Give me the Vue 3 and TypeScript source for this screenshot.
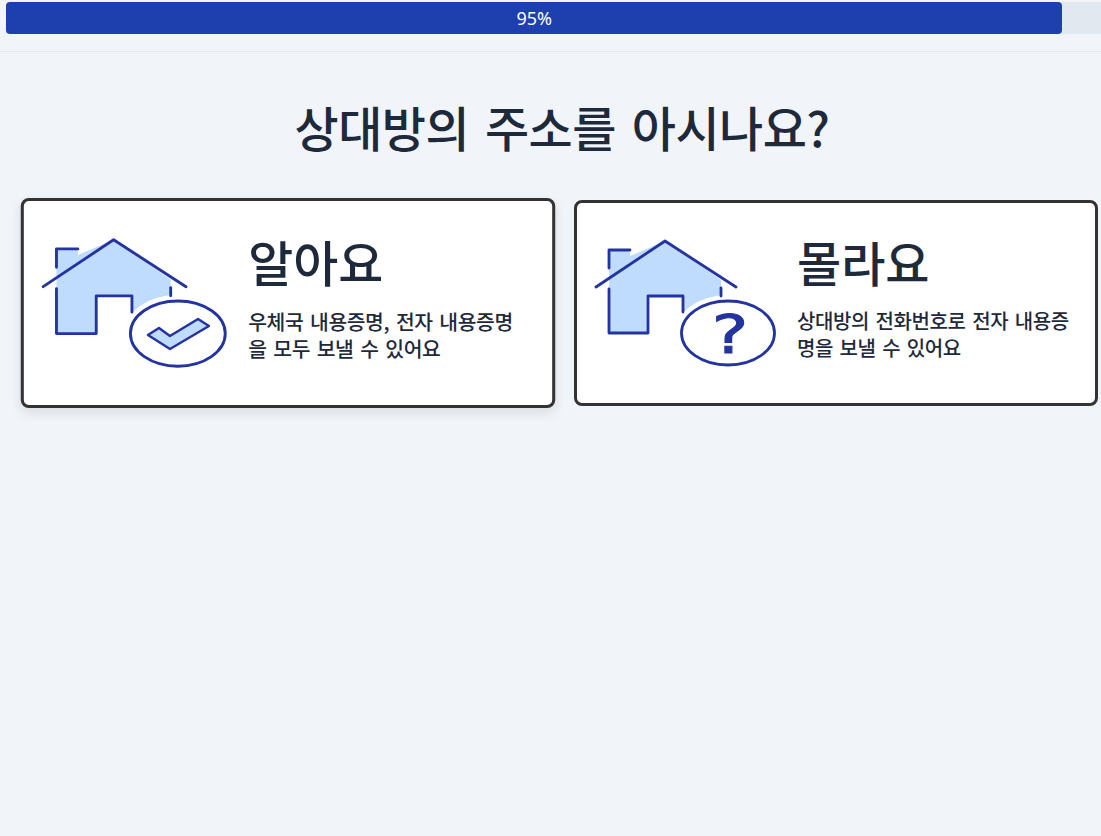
<script setup lang="ts">
const cards = [
  { title: '알아요', desc: '우체국 내용증명, 전자 내용증명을 모두 보낼 수 있어요', kind: 'check', active: true },
  { title: '몰라요', desc: '상대방의 전화번호로 전자 내용증명을 보낼 수 있어요', kind: 'question', active: false },
]
</script>

<template>
  <div class="page">
    <header class="top">
      <div class="track">
        <div class="fill" :style="{ width: '95%' }">95%</div>
      </div>
    </header>
    <main class="main">
      <h1 class="title">상대방의 주소를 아시나요?</h1>
      <div class="cards">
        <div v-for="c in cards" :key="c.title" class="card" :class="{ active: c.active }">
          <svg class="icon" viewBox="0 0 190 140" width="190" height="140">
            <path d="M19 17H40V23L75 8L131 47V100H93V63H58V100H19Z" fill="#bfdbfe" />
            <ellipse cx="138" cy="100" rx="53" ry="38" fill="#fff" />
            <g fill="none" stroke="#23339f" stroke-width="2.8" stroke-linejoin="round" stroke-linecap="round">
              <path d="M6 54L75 8L146 54" />
              <path d="M19 35V17H40" />
              <path d="M19 56V100H58V63H93V79" />
              <path d="M131 55V63" />
              <ellipse cx="138" cy="100" rx="46.5" ry="32" />
            </g>
            <path v-if="c.kind === 'check'" d="M108.7 101.4L119.5 94.5L130.3 102.4L157.8 85.7L168.5 92.5L130.3 115.1Z" fill="#bfdbfe" stroke="#23339f" stroke-width="2.4" stroke-linejoin="round" />
            <text v-else transform="translate(140 120) scale(1.28 1)" text-anchor="middle" class="qm">?</text>
          </svg>
          <div class="text">
            <h2 class="name">{{ c.title }}</h2>
            <p class="desc">{{ c.desc }}</p>
          </div>
        </div>
      </div>
    </main>
  </div>
</template>

<style>
html, body { margin: 0; background: #f1f5f9; overflow: hidden; }
</style>

<style scoped>
.page {
  width: 1101px;
  height: 836px;
  overflow: hidden;
  background: #f1f5f9;
  font-family: "Noto Sans CJK KR", "Noto Sans", sans-serif;
  color: #1e293b;
}
.top {
  height: 49px;
  border-bottom: 1px solid #e2e8f0;
  padding: 2px 0 0 6px;
}
.track {
  width: 1112px;
  height: 32px;
  background: #e2e8f0;
  border-radius: 4px;
}
.fill {
  height: 32px;
  background: #1e40af;
  border-radius: 4px;
  color: #fff;
  font: 18px/32px "Noto Sans", sans-serif;
  text-align: center;
}
.main { padding: 42px 0 0 26px; width: 1072px; }
.title {
  margin: 0;
  text-align: center;
  font-size: 48px;
  line-height: 64px;
  font-weight: 500;
  letter-spacing: -0.5px;
  word-spacing: 5.5px;
}
.cards {
  display: flex;
  gap: 24px;
  margin-top: 42px;
}
.card {
  flex: 0 0 524px;
  height: 206px;
  box-sizing: border-box;
  border: 3px solid #333;
  border-radius: 8px;
  background: #fff;
  display: flex;
  align-items: center;
  padding: 0 24px 0 13px;
  gap: 17px;
}
.card.active {
  transform: scale(1.02);
  box-shadow: 0 4px 10px rgba(15, 23, 42, 0.1);
}
.icon { flex: none; }
.text { flex: 1; min-width: 0; padding-bottom: 14px; }
.name {
  margin: 0 0 16px;
  font-size: 48px;
  line-height: 60px;
  font-weight: 500;
}
.desc {
  margin: 0;
  font-size: 20px;
  line-height: 27px;
  font-weight: 500;
  letter-spacing: -0.4px;
  word-spacing: 2.5px;
  word-break: break-all;
}
.qm {
  font-family: "DejaVu Sans", sans-serif;
  font-size: 54px;
  font-weight: 400;
  fill: #23339f;
  stroke: #23339f;
  stroke-width: 1px;
}
</style>
